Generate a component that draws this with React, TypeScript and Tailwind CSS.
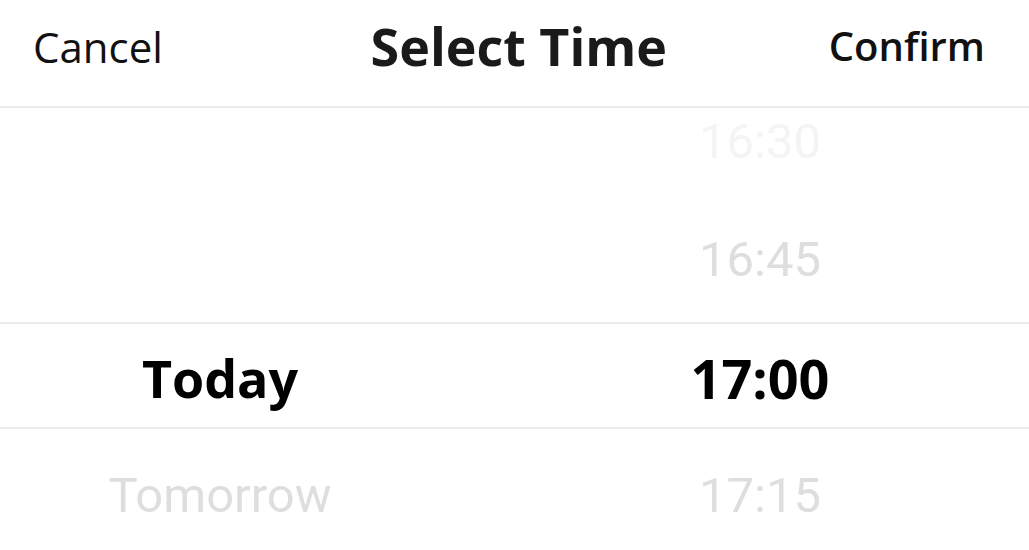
const hours = [
  { time: "16:30", color: "text-[#f4f4f4]" },
  { time: "16:45", color: "text-[#dedede]" },
  { time: "17:00", color: "text-black", selected: true },
  { time: "17:15", color: "text-[#dedede]" },
];

const days = ["", "", "Today", "Tomorrow"];

export default function App() {
  return (
    <div className="w-[1029px] h-[550px] bg-white overflow-hidden flex flex-col font-['Open_Sans',sans-serif]">
      {/* Header */}
      <div className="h-[106px] flex items-center justify-between pl-[33px] pr-[44px] shrink-0">
        <button className="text-[42px] text-[#111] pb-[14px]">Cancel</button>
        <h1 className="text-[52px] font-bold text-[#1a1a1a] pb-[14px] pl-[46px]">Select Time</h1>
        <button className="text-[40px] font-semibold text-[#111] pb-[14px]">Confirm</button>
      </div>
      <div className="h-[2px] bg-[#ebebeb] shrink-0" />

      {/* Picker */}
      <div className="relative flex-1 overflow-hidden">
        <div className="flex mt-[-25px]">
          <div className="w-[440px] flex flex-col">
            {days.map((d, i) => (
              <div
                key={i}
                className={`h-[118px] flex items-center justify-center ${
                  d === "Today"
                    ? "text-[52px] font-bold text-black"
                    : "text-[49px] text-[#dedede] font-['Roboto',sans-serif]"
                }`}
              >
                {d}
              </div>
            ))}
          </div>
          <div className="flex-1 pl-[51px] flex flex-col">
            {hours.map((h) => (
              <div
                key={h.time}
                className={`h-[118px] flex items-center justify-center ${h.color} ${
                  h.selected ? "text-[54px] font-bold" : "text-[49px] font-['Roboto',sans-serif]"
                }`}
              >
                {h.time}
              </div>
            ))}
          </div>
        </div>
        {/* selection lines */}
        <div className="absolute left-0 right-0 top-[214px] h-[2px] bg-[#ebebeb]" />
        <div className="absolute left-0 right-0 top-[319px] h-[2px] bg-[#ebebeb]" />
      </div>
    </div>
  );
}
